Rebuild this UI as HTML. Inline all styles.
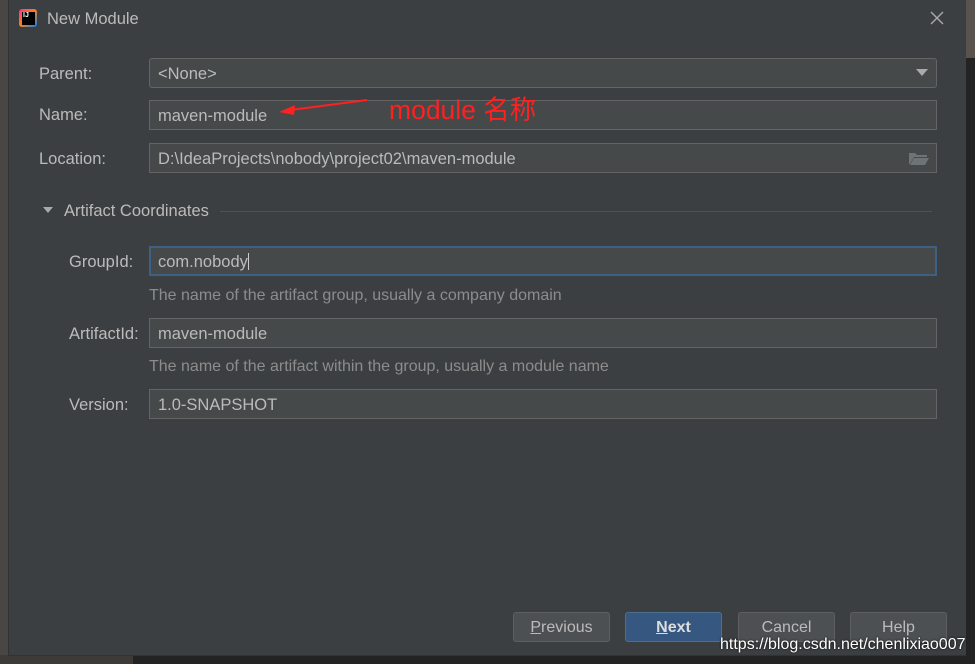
<!DOCTYPE html>
<html><head><meta charset="utf-8"><style>
*{margin:0;padding:0;box-sizing:border-box}
body{width:975px;height:664px;background:#232323;position:relative;overflow:hidden;font-family:"Liberation Sans","Noto Sans CJK SC",sans-serif;font-size:16.5px;color:#bbbbbb}
.a{position:absolute}
.f{position:absolute;left:149px;width:788px;height:30px;background:#45494a;border:1px solid #646464;color:#bbb;padding:6px 8px;line-height:18px;white-space:nowrap}
.l{position:absolute;line-height:18px;white-space:nowrap}
.h{position:absolute;left:149px;color:#8c8c8c;line-height:18px;font-size:16px;white-space:nowrap}
.b{position:absolute;top:612px;width:97px;height:30px;border:1px solid #5e6060;background:#4c5052;border-radius:3px;text-align:center;line-height:30px;color:#bbb;font-size:16px}
</style></head><body>
<div class="a" style="left:0;top:0;width:9px;height:664px;background:#4a4644"></div>
<div class="a" style="left:966px;top:0;width:9px;height:58px;background:#5a524d"></div>
<div class="a" style="left:0;top:655px;width:133px;height:9px;background:#3e3a38"></div>
<div class="a" style="left:8px;top:0;width:958px;height:656px;background:#3c3f41;border-left:1px solid #323232;border-bottom:1px solid #323232"></div>
<div class="a" style="left:19px;top:9px;width:18px;height:18px;background:linear-gradient(135deg,#ff318c,#fc801d 50%,#087cfa);border-radius:3px"></div>
<div class="a" style="left:22px;top:12px;width:13px;height:13px;background:#000;color:#fff;font-size:7px;font-weight:bold;line-height:8px;padding-left:1px">IJ</div>
<div class="l" style="left:47px;top:10px;color:#bbb">New Module</div>
<svg class="a" style="left:930px;top:11px" width="14" height="14"><path d="M1 1L13 13M13 1L1 13" stroke="#aaa" stroke-width="1.4"/></svg>
<div class="l" style="left:39px;top:65px">Parent:</div>
<div class="f" style="top:58px;border-radius:3px">&lt;None&gt;</div>
<svg class="a" style="left:916px;top:69px" width="12" height="8"><path d="M0 0H12L6 7Z" fill="#aaa"/></svg>
<div class="l" style="left:39px;top:106px">Name:</div>
<div class="f" style="top:100px">maven-module</div>
<svg class="a" style="left:275px;top:96px" width="100" height="22"><path d="M92 4L8 15" stroke="#ff2020" stroke-width="2"/><path d="M4 16L20 9L19 19Z" fill="#ff2020"/></svg>
<div class="a" style="left:389px;top:95px;color:#ff2020;font-size:26.5px;line-height:30px;white-space:nowrap">module 名称</div>
<div class="l" style="left:39px;top:150px">Location:</div>
<div class="f" style="top:143px">D:\IdeaProjects\nobody\project02\maven-module</div>
<svg class="a" style="left:909px;top:151px" width="20" height="14"><path d="M0 2H6L8 4H18V6H5L1 13H0Z M5 7H20L16 14H1Z" fill="#6e7375"/></svg>
<svg class="a" style="left:43px;top:207px" width="10" height="7"><path d="M0 0H10L5 6Z" fill="#aaa"/></svg>
<div class="l" style="left:64px;top:202px">Artifact Coordinates</div>
<div class="a" style="left:220px;top:211px;width:712px;height:1px;background:#515151"></div>
<div class="l" style="left:69px;top:253px">GroupId:</div>
<div class="f" style="top:246px;border:2px solid #3d6185;padding:5px 7px">com.nobody<span style="display:inline-block;width:1px;height:17px;background:#ccc;vertical-align:-3px"></span></div>
<div class="h" style="top:287px">The name of the artifact group, usually a company domain</div>
<div class="l" style="left:69px;top:325px">ArtifactId:</div>
<div class="f" style="top:318px">maven-module</div>
<div class="h" style="top:358px">The name of the artifact within the group, usually a module name</div>
<div class="l" style="left:69px;top:396px">Version:</div>
<div class="f" style="top:389px">1.0-SNAPSHOT</div>
<div class="b" style="left:513px"><u>P</u>revious</div>
<div class="b" style="left:625px;background:#365880;border-color:#4c708c;font-weight:bold;color:#ddd"><u>N</u>ext</div>
<div class="b" style="left:738px">Cancel</div>
<div class="b" style="left:850px">Help</div>
<div class="a" style="left:720px;top:635px;color:#fff;font-size:16px;line-height:20px;text-shadow:0 0 2px #000">https://blog.csdn.net/chenlixiao007</div>
</body></html>
